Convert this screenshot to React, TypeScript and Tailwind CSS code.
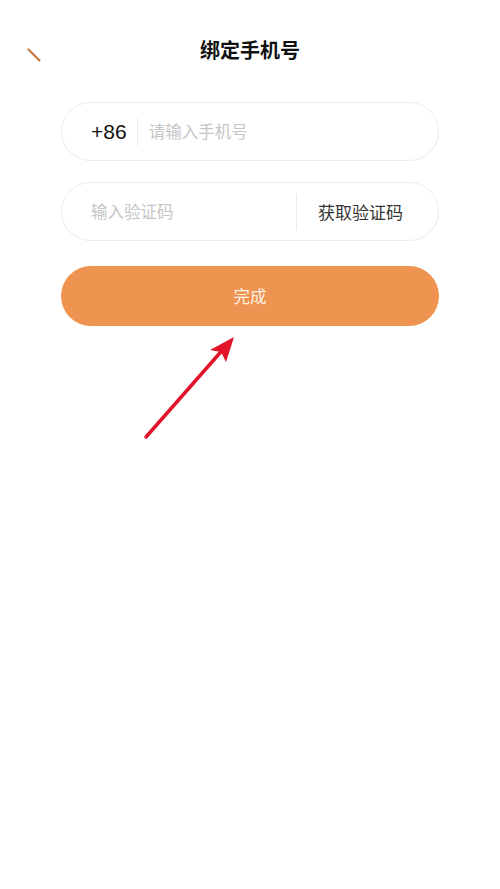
export default function App() {
  return (
    <div
      className="relative h-[889px] w-[500px] overflow-hidden bg-white"
      style={{ fontFamily: '"Noto Sans CJK SC", "Noto Sans", sans-serif' }}
    >
      {/* header */}
      <div className="relative flex h-[100px] items-start justify-center pt-[35px]">
        <svg
          className="absolute left-[26px] top-[47px]"
          width="16"
          height="16"
          viewBox="0 0 16 16"
        >
          <line
            x1="2.5"
            y1="2.5"
            x2="13.5"
            y2="13.5"
            stroke="#c97b3f"
            strokeWidth="2.2"
            strokeLinecap="round"
          />
        </svg>
        <h1 className="text-[20px] font-bold leading-[30px] text-[#111]">
          绑定手机号
        </h1>
      </div>

      <div className="flex flex-col px-[61px] pt-[2px]">
        {/* phone */}
        <div className="flex h-[59px] items-center rounded-full border border-[#ebebeb] pl-[29px]">
          <span
            className="text-[21px] text-[#111]"
            style={{ fontFamily: '"Liberation Sans", Arial, sans-serif' }}
          >
            +86
          </span>
          <span className="ml-[10px] h-[28px] w-px bg-[#ececec]" />
          <span className="ml-[11px] text-[16.5px] text-[#c6c6c6]">请输入手机号</span>
        </div>

        {/* code */}
        <div className="mt-[21px] flex h-[59px] items-center rounded-full border border-[#ebebeb] pl-[29px]">
          <span className="flex-1 text-[16.5px] text-[#c6c6c6]">输入验证码</span>
          <span className="h-[36px] w-px bg-[#ececec]" />
          <span className="ml-[21px] mr-[35px] text-[17px] text-[#333]">获取验证码</span>
        </div>

        {/* submit */}
        <button className="mt-[25px] flex h-[60px] items-center justify-center rounded-full bg-[#ef9450] text-[16.5px] text-[#fdf1e6]">
          完成
        </button>
      </div>

      {/* annotation arrow */}
      <svg
        className="pointer-events-none absolute left-0 top-0"
        width="500"
        height="889"
        viewBox="0 0 500 889"
      >
        <line
          x1="146"
          y1="437"
          x2="226"
          y2="346"
          stroke="#e3132a"
          strokeWidth="3.5"
          strokeLinecap="round"
        />
        <path d="M234 337 L210 350 L221 352 L226 362 Z" fill="#e3132a" />
      </svg>
    </div>
  )
}
